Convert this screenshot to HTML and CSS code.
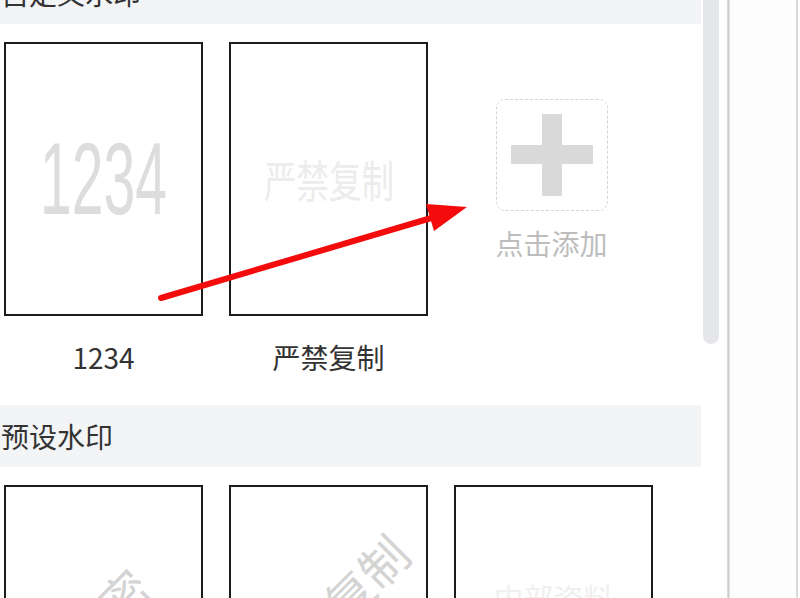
FILE: index.html
```html
<!DOCTYPE html>
<html lang="zh-CN">
<head>
  <meta charset="UTF-8" />
  <title>水印</title>
  <link rel="stylesheet" href="styles.css">
</head>
<body>
  <div class="app">
    <!-- Watermark panel -->
    <div class="panel">
      <div class="section-title first">自定义水印</div>
      <div class="cards">
        <div class="item">
          <div class="card">
            <span class="mark-num">1234</span>
          </div>
          <div class="label">1234</div>
        </div>
        <div class="item">
          <div class="card">
            <span class="mark-text">严禁复制</span>
          </div>
          <div class="label">严禁复制</div>
        </div>
        <div class="item add-item">
          <div class="add-box">
            <span class="plus"></span>
          </div>
          <div class="add-label">点击添加</div>
        </div>
      </div>

      <div class="section-title">预设水印</div>
      <div class="cards">
        <div class="item">
          <div class="card">
            <span class="mark-tilt">机密</span>
          </div>
        </div>
        <div class="item">
          <div class="card">
            <span class="mark-tilt">严禁复制</span>
          </div>
        </div>
        <div class="item">
          <div class="card">
            <span class="mark-flat">内部资料</span>
          </div>
        </div>
      </div>
    </div>

    <div class="scroll-track">
      <div class="scroll-thumb"></div>
    </div>
    <div class="divider"></div>
    <div class="side"></div>
    <div class="edge"></div>
  </div>

  <!-- Annotation arrow -->
  <svg class="arrow" width="800" height="598" viewBox="0 0 800 598">
    <line x1="161" y1="298" x2="438" y2="216" stroke="#f40c0c" stroke-width="6" stroke-linecap="round"/>
    <polygon points="426,204 467,207 434,231" fill="#f40c0c"/>
  </svg>
</body>
</html>
```

FILE: styles.css
```css
* {
  margin: 0;
  padding: 0;
  box-sizing: border-box;
}

body {
  font-family: "Noto Sans CJK SC", "Noto Sans", sans-serif;
  background: #fff;
  width: 800px;
  height: 598px;
  overflow: hidden;
  position: relative;
}

.app {
  display: flex;
  height: 598px;
}

/* Panel */
.panel {
  width: 701px;
  flex-shrink: 0;
}
.section-title {
  height: 62px;
  line-height: 62px;
  background: #f3f4f6;
  color: #333;
  font-size: 28px;
  padding-left: 1px;
}
.section-title.first {
  margin-top: -38px;
}
.cards {
  display: grid;
  grid-template-columns: repeat(3, 199px);
  column-gap: 26px;
  padding: 18px 0 33px 4px;
}
.item {
  display: flex;
  flex-direction: column;
  align-items: center;
}
.card {
  width: 199px;
  height: 274px;
  border: 2px solid #1c1c1c;
  background: #fff;
  display: flex;
  align-items: center;
  justify-content: center;
  overflow: hidden;
}
.label {
  margin-top: 26px;
  line-height: 30px;
  font-size: 28px;
  color: #333;
}

/* Watermark previews */
.mark-num {
  font-family: "Liberation Sans", Arial, sans-serif;
  font-size: 102px;
  color: #dddddd;
  transform: scaleX(0.56);
  line-height: 1;
}
.mark-text {
  font-size: 44px;
  color: #ececec;
  transform: scaleX(0.74);
  white-space: nowrap;
  line-height: 1;
}
.mark-tilt {
  font-size: 48px;
  color: #d4d4d4;
  white-space: nowrap;
  line-height: 1;
  transform: translate(3px, -11px) rotate(-45deg);
}
.mark-flat {
  font-size: 30px;
  color: #efefef;
  white-space: nowrap;
  margin-top: -50px;
}

/* Add tile */
.add-item {
  padding-top: 57px;
}
.add-box {
  width: 112px;
  height: 112px;
  margin-left: -4px;
  border: 1px dashed #d4d4d4;
  border-radius: 9px;
  display: flex;
  align-items: center;
  justify-content: center;
}
.plus {
  position: relative;
  width: 82px;
  height: 82px;
}
.plus::before,
.plus::after {
  content: '';
  position: absolute;
  background: #d9d9d9;
}
.plus::before {
  left: 31px;
  top: 0;
  width: 20px;
  height: 82px;
}
.plus::after {
  left: 0;
  top: 31px;
  width: 82px;
  height: 19px;
}
.add-label {
  margin-top: 17px;
  margin-left: -4px;
  line-height: 30px;
  font-size: 28px;
  color: #bdbdbd;
}

/* Right edge */
.scroll-track {
  width: 16px;
  margin-left: 2px;
}
.scroll-thumb {
  height: 344px;
  background: #e6e7ea;
  border-radius: 0 0 8px 8px;
}
.divider {
  width: 3px;
  margin-left: 8px;
  background: linear-gradient(to right, #e0e0e0, #cfcfcf, #ececec);
}
.side {
  width: 66px;
  background: #fdfdfd;
}
.edge {
  width: 2px;
  background: #dadada;
}

.arrow {
  position: absolute;
  top: 0;
  left: 0;
  pointer-events: none;
}
```
